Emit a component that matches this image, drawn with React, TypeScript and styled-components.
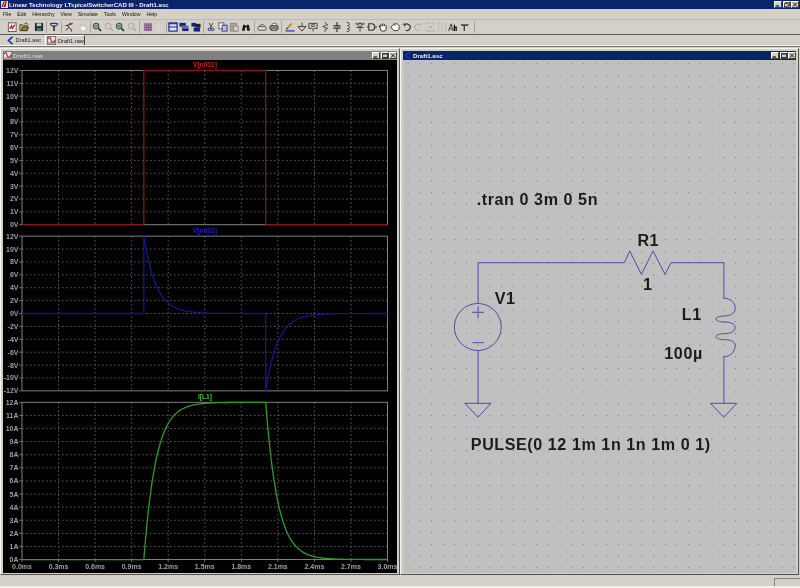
import React from "react";
import styled, { createGlobalStyle } from "styled-components";

const GlobalStyle = createGlobalStyle`
  html, body { margin: 0; padding: 0; background: #d4d0c8; overflow: hidden; }
  #root { width: 800px; height: 588px; }
  * { box-sizing: border-box; }
`;

const Shell = styled.div`
  width: 800px;
  height: 588px;
  display: flex;
  flex-direction: column;
  overflow: hidden;
  background: #d4d0c8;
  font-family: "Liberation Sans", Arial, sans-serif;
  filter: blur(0.25px);
`;

const TitleBar = styled.header`
  height: 9px;
  flex: none;
  background: #0a246a;
  display: flex;
  align-items: center;
  padding: 0 1px 0 1px;
  gap: 1px;
  color: #eef0f6;
  font-size: 6.2px;
  font-weight: 700;
`;

const TitleText = styled.span<{ $dim?: boolean }>`
  flex: 1;
  white-space: nowrap;
  color: ${(p) => (p.$dim ? "#c8c8c8" : "#f2f2f2")};
  font-size: 6px;
  font-weight: 700;
  letter-spacing: 0.05px;
`;

const CaptionGroup = styled.div`
  display: flex;
  gap: 0.5px;
  flex: none;
`;

const CaptionButton = styled.div`
  width: 8px;
  height: 7px;
  background: #d4d0c8;
  border-top: 1px solid #fff;
  border-left: 1px solid #fff;
  border-right: 1px solid #404040;
  border-bottom: 1px solid #404040;
  display: flex;
  align-items: center;
  justify-content: center;
`;

const MenuBar = styled.nav`
  height: 11px;
  flex: none;
  display: flex;
  align-items: center;
  padding: 0 0 1px 3px;
  gap: 6px;
  font-size: 5.2px;
  color: #111;
  border-bottom: 1px solid #bdbab2;
`;

const Toolbar = styled.div`
  height: 15px;
  flex: none;
  display: flex;
  align-items: center;
  padding-left: 6px;
  border-bottom: 1px solid #5a5a58;
`;

const ToolRow = styled.div`
  display: flex;
  align-items: center;
  filter: blur(0.3px);
`;

const ToolButton = styled.div`
  width: 11.7px;
  height: 11px;
  flex: none;
  display: flex;
  align-items: center;
  justify-content: center;
`;

const ToolGap = styled.div<{ $w: number; $line?: boolean }>`
  width: ${(p) => p.$w}px;
  height: 12px;
  flex: none;
  ${(p) =>
    p.$line
      ? `background: linear-gradient(#a8a59d, #a8a59d) center / 1px 100% no-repeat;`
      : ""}
`;

const TabStrip = styled.div`
  height: 10px;
  flex: none;
  display: flex;
  align-items: stretch;
  padding-left: 2px;
  gap: 1px;
  font-size: 5.6px;
  color: #222;
`;

const Tab = styled.div<{ $active?: boolean; $w: number }>`
  width: ${(p) => p.$w}px;
  display: flex;
  align-items: center;
  gap: ${(p) => (p.$active ? 0.5 : 2)}px;
  padding-left: ${(p) => (p.$active ? 4 : 1)}px;
  white-space: nowrap;
  border-left: ${(p) => (p.$active ? "none" : "1px solid #fff")};
  border-top: ${(p) => (p.$active ? "none" : "1px solid #fff")};
  border-right: ${(p) => (p.$active ? "none" : "1px solid #404040")};
`;

const Workspace = styled.main`
  flex: 1;
  min-height: 0;
  display: flex;
  border-top: 1px solid #f4f3ef;
  box-shadow: inset 0 1px 0 #77756f;
`;

const ChildWindow = styled.section<{ $w: number }>`
  width: ${(p) => p.$w}px;
  flex: none;
  margin-top: 2px;
  display: flex;
  flex-direction: column;
  padding: 2px 2px 1px 2px;
  background: #d4d0c8;
  border-top: 1px solid #f6f5f1;
  border-left: 1px solid #f6f5f1;
  border-right: 1px solid #55534f;
  border-bottom: 1px solid #55534f;
  height: 527px;
`;

const ChildTitle = styled.div<{ $active?: boolean }>`
  height: 9px;
  flex: none;
  display: flex;
  align-items: center;
  gap: 1px;
  background: ${(p) => (p.$active ? "#0a246a" : "#808080")};
`;

const PlotFrame = styled.svg`
  display: block;
  flex: 1;
  min-height: 0;
  width: 100%;
  background: #000;
`;

const SchematicFrame = styled.svg`
  display: block;
  flex: 1;
  min-height: 0;
  width: 100%;
  background: #c0c0c0;
`;

const StatusBar = styled.footer`
  flex: 1;
  min-height: 0;
  display: flex;
  justify-content: flex-end;
  align-items: flex-end;
  border-bottom: 2px solid #efeee9;
`;

const StatusPanel = styled.div`
  width: 26px;
  height: 8px;
  border-top: 1px solid #85827a;
  border-left: 1px solid #85827a;
`;

/* ---------- icons ---------- */

const Ico: React.FC<{ children: React.ReactNode; s?: number }> = ({ children, s = 10 }) => (
  <svg width={s} height={s} viewBox="0 0 11 11" fill="none" strokeWidth={1}>
    {children}
  </svg>
);

const Schem = () => (
  <Ico s={9}>
    <path d="M8 1 L3 5.5 L8 10" stroke="#1a2fb0" strokeWidth={2} />
  </Ico>
);

const WaveThumb = () => (
  <Ico s={9}>
    <rect x="0.5" y="0.5" width="10" height="10" fill="#e8e4dc" stroke="#6a6a6a" />
    <path d="M1 4 C3 1 4 1 5 5 S8 8 10 5" stroke="#b01818" strokeWidth={1.3} />
    <path d="M1 8.5 H10" stroke="#555" />
  </Ico>
);

const Mag = ({ off }: { off?: boolean }) => (
  <Ico>
    <circle cx="4.5" cy="4.5" r="3" stroke={off ? "#b0ada7" : "#3f5a48"} strokeWidth={1.3} fill={off ? "#dedbd4" : "#a5c9ae"} />
    <path d="M7 7 L10 10" stroke={off ? "#b0ada7" : "#222"} strokeWidth={1.6} />
    <path d="M3 4.5 H6" stroke={off ? "#c0bdb6" : "#222"} />
  </Ico>
);

const Win = ({ kind }: { kind: number }) => (
  <Ico>
    {kind === 0 && (
      <>
        <rect x="1" y="1" width="9" height="9" stroke="#10208c" strokeWidth={1.2} fill="#dfe2ee" />
        <path d="M1 5.5 H10 M1 2 H10" stroke="#10208c" strokeWidth={1.2} />
      </>
    )}
    {kind === 1 && (
      <>
        <rect x="0.5" y="1" width="7" height="4" fill="#10208c" />
        <rect x="2.5" y="4" width="8" height="3" fill="#6a6f88" />
        <rect x="3.5" y="7" width="7" height="3" fill="#10208c" />
      </>
    )}
    {kind === 2 && (
      <>
        <rect x="0.5" y="1" width="5" height="4" fill="#10208c" />
        <rect x="5" y="2" width="5.5" height="4" fill="#223" />
        <rect x="3" y="6" width="7" height="4.5" fill="#10208c" />
      </>
    )}
  </Ico>
);

const Hand = ({ light }: { light?: boolean }) => (
  <Ico>
    <path
      d="M3 5 V2.5 M5 4.5 V1.5 M7 4.5 V2 M9 5 V3.5 M3 5 L1.5 4 L3 9 C4 10.5 8 10.5 9 8.5 V5"
      stroke={light ? "#c0bdb6" : "#333"}
      strokeWidth={1.1}
      fill="#f6f4ef"
    />
  </Ico>
);

const ICONS: Record<string, React.ReactNode> = {
  new: (
    <Ico>
      <rect x="1.5" y="1" width="8.5" height="9.5" fill="#fff" stroke="#555" />
      <path d="M3 7.5 L5 4 L6 7 L8.5 3" stroke="#d01818" strokeWidth={1.5} />
    </Ico>
  ),
  open: (
    <Ico>
      <path d="M1 3 H4 L5 4 H9 V9.5 H1 Z" fill="#c9b04a" stroke="#4a4428" />
      <path d="M2.5 9.5 L4 5.5 H10.5 L9 9.5 Z" fill="#8f8436" stroke="#3c3820" />
      <path d="M6 2 L8 1 L10 3" stroke="#333" />
    </Ico>
  ),
  save: (
    <Ico>
      <rect x="1" y="1" width="9" height="9" fill="#14322f" />
      <rect x="3" y="1.5" width="5" height="3" fill="#c7ccc8" />
      <rect x="3" y="6.5" width="5" height="3.5" fill="#5d6b69" />
    </Ico>
  ),
  run: (
    <Ico>
      <path d="M1 2.5 C3 1 8 1 10 2.5" stroke="#222" strokeWidth={1.3} />
      <path d="M1.5 3 L5.5 5 L9.5 3" stroke="#2a3fa8" strokeWidth={1.2} />
      <path d="M5.5 4 V10" stroke="#222" strokeWidth={1.6} />
    </Ico>
  ),
  halt: (
    <Ico>
      <path d="M2 9.5 L5 6 L4.5 3.5 L9.5 1.5 M1.5 4 L5 3.5 M5 6 L8 8 V10.5 M7 1 L8 3" stroke="#333" strokeWidth={1.1} />
      <circle cx="6.5" cy="1.6" r="1" fill="#c44" />
    </Ico>
  ),
  handOff: <Hand light />,
  zoomOn: <Mag />,
  zoomOff: <Mag off />,
  tile: (
    <Ico>
      <rect x="1" y="1" width="9" height="9" fill="#b78da6" />
      <path d="M1 3.5 H10 M1 6 H10 M1 8.5 H10 M3.5 1 V10 M6 1 V10 M8.5 1 V10" stroke="#6b5b8c" strokeWidth={0.9} />
    </Ico>
  ),
  tileOff: (
    <Ico>
      <rect x="1" y="1" width="9" height="9" fill="#c6c3bb" />
      <path d="M1 3.5 H10 M1 6 H10 M1 8.5 H10 M3.5 1 V10 M6 1 V10 M8.5 1 V10" stroke="#e2e0da" strokeWidth={0.9} />
    </Ico>
  ),
  win0: <Win kind={0} />,
  win1: <Win kind={1} />,
  win2: <Win kind={2} />,
  cut: (
    <Ico>
      <path d="M3.5 1 L6 6 M7.5 1 L5 6" stroke="#444" strokeWidth={1} />
      <circle cx="3.8" cy="8" r="1.5" stroke="#1a2a80" strokeWidth={1.1} />
      <circle cx="7.2" cy="8" r="1.5" stroke="#1a2a80" strokeWidth={1.1} />
    </Ico>
  ),
  copy: (
    <Ico>
      <rect x="1" y="1" width="5.5" height="6.5" fill="#fff" stroke="#555" />
      <rect x="4.5" y="3.5" width="5.5" height="6.5" fill="#b8bfdc" stroke="#2b3a8c" />
    </Ico>
  ),
  pasteOff: (
    <Ico>
      <rect x="1.5" y="1.5" width="7" height="8.5" fill="#a8a59e" stroke="#8b8880" />
      <rect x="5" y="4.5" width="5" height="5.5" fill="#d5d2cb" stroke="#8b8880" />
    </Ico>
  ),
  find: (
    <Ico>
      <path d="M1 9 L2.5 3 H4.5 V9 Z M10 9 L8.5 3 H6.5 V9 Z" fill="#111" />
      <rect x="4.5" y="4" width="2" height="2" fill="#111" />
      <circle cx="2.7" cy="8.5" r="1.5" fill="#333" />
      <circle cx="8.3" cy="8.5" r="1.5" fill="#333" />
    </Ico>
  ),
  printOutline: (
    <Ico>
      <path d="M2.5 5 C3 2 8 2 8.5 5" stroke="#555" />
      <rect x="1" y="5" width="9" height="4" rx="1" fill="#d8d5ce" stroke="#555" />
    </Ico>
  ),
  print: (
    <Ico>
      <path d="M3 4 L4 1.5 H8 L9 4" stroke="#666" fill="#e8e8e8" />
      <rect x="1" y="4" width="9" height="4.5" rx="1" fill="#8a8781" stroke="#444" />
      <rect x="3" y="7.5" width="5" height="2" fill="#ccc" stroke="#555" />
    </Ico>
  ),
  wire: (
    <Ico>
      <path d="M3 6.5 L7.5 1.5" stroke="#bb8a20" strokeWidth={1.8} />
      <path d="M1.5 8 L3 6.5" stroke="#222" strokeWidth={1.4} />
      <path d="M0.5 9.8 H10.5" stroke="#2433b8" strokeWidth={1.3} />
    </Ico>
  ),
  ground: (
    <Ico>
      <path d="M5.5 0.5 V5 M1 5 H10 L5.5 10 Z" stroke="#444" strokeWidth={1.1} />
    </Ico>
  ),
  label: (
    <Ico>
      <path d="M1 1.5 H10 V7 H7 L5.5 8 L4 7 H1 Z" stroke="#444" strokeWidth={1.1} />
      <path d="M5.5 8 V10.5 M4 3 H7 V5 H4Z" stroke="#444" strokeWidth={0.9} />
    </Ico>
  ),
  res: (
    <Ico>
      <path d="M6 0 V1.5 L8.5 3 L3 5 L8.5 7 L5.5 8.5 V11" stroke="#444" strokeWidth={1} />
    </Ico>
  ),
  cap: (
    <Ico>
      <path d="M5.5 0 V4 M5.5 7 V11 M1.5 4.3 H9.5 M1.5 6.7 H9.5" stroke="#333" strokeWidth={1.3} />
    </Ico>
  ),
  ind: (
    <Ico>
      <path d="M4 0.5 C8 0.5 8 4 5 4 C8 4 8 7.5 5 7.5 C8 7.5 8 10.5 4 10.5" stroke="#333" strokeWidth={1} />
    </Ico>
  ),
  diode: (
    <Ico>
      <path d="M0.5 2 H10.5 M5.5 2 V0 M2 2 L5.5 6 L9 2 M1.5 6 H9.5 M5.5 6 V10.5" stroke="#333" strokeWidth={1} />
    </Ico>
  ),
  comp: (
    <Ico>
      <path d="M0 5.5 H2 M2 2 H5.5 C9.5 2 9.5 9 5.5 9 H2 Z M8.5 5.5 H11" stroke="#333" strokeWidth={1.2} />
    </Ico>
  ),
  handA: <Hand />,
  handB: (
    <Ico>
      <path d="M1 5.5 L5 2 H8 L10 4 V8 L8 9.5 H4 Z" stroke="#333" fill="#f6f4ef" />
      <path d="M4 2 L6 4" stroke="#333" />
    </Ico>
  ),
  undo: (
    <Ico>
      <path d="M2.5 4 A3.5 3.5 0 1 1 4 9" stroke="#333" strokeWidth={1.3} />
      <path d="M0.8 2.5 L3.5 2 L3 5" stroke="#333" strokeWidth={1} />
    </Ico>
  ),
  redoOff: (
    <Ico>
      <path d="M8.5 4 A3.5 3.5 0 1 0 7 9" stroke="#b5b2ab" strokeWidth={1.3} />
      <path d="M10.2 2.5 L7.5 2 L8 5" stroke="#b5b2ab" strokeWidth={1} />
    </Ico>
  ),
  rotOff: (
    <Ico>
      <path d="M1 3 V1 H10 V3 M1 8 V10 H10 V8 M3 5.5 H8 M6 4 L8 5.5 L6 7" stroke="#b0ada6" strokeWidth={1} />
    </Ico>
  ),
  mirOff: (
    <Ico>
      <path d="M3 1 H1.5 V10 H3 M8 1 H9.5 V10 H8 M5.5 1 V10" stroke="#b0ada6" strokeWidth={1} strokeDasharray="2 1" />
    </Ico>
  ),
  text: (
    <Ico>
      <path d="M0.5 10 L3.5 2 L5.5 10 M1.5 7.5 H5" stroke="#444" strokeWidth={1.1} />
      <path d="M7 3 V10 M9 5 V10 M7 6 H9.5" stroke="#111" strokeWidth={1.4} />
    </Ico>
  ),
  spice: (
    <Ico>
      <path d="M0.5 2.5 H10 L8.5 4.5 H5.5 V10 H4 V4.5 H2 Z" fill="#444" />
    </Ico>
  ),
};

type ToolItem = { icon: string } | { gap: number; line?: boolean };

const TOOLS: ToolItem[] = [
  { icon: "new" },
  { icon: "open" },
  { gap: 3.3 },
  { icon: "save" },
  { gap: 3.9, line: true },
  { icon: "run" },
  { gap: 3.7, line: true },
  { icon: "halt" },
  { gap: 2 },
  { icon: "handOff" },
  { gap: 2, line: true },
  { icon: "zoomOn" },
  { icon: "zoomOff" },
  { icon: "zoomOn" },
  { icon: "zoomOff" },
  { gap: 4.2, line: true },
  { icon: "tile" },
  { icon: "tileOff" },
  { gap: 1.6, line: true },
  { icon: "win0" },
  { icon: "win1" },
  { icon: "win2" },
  { gap: 3.3, line: true },
  { icon: "cut" },
  { icon: "copy" },
  { icon: "pasteOff" },
  { icon: "find" },
  { gap: 4.3, line: true },
  { icon: "printOutline" },
  { icon: "print" },
  { gap: 4.3, line: true },
  { icon: "wire" },
  { icon: "ground" },
  { icon: "label" },
  { icon: "res" },
  { icon: "cap" },
  { icon: "ind" },
  { icon: "diode" },
  { icon: "comp" },
  { icon: "handA" },
  { icon: "handB" },
  { icon: "undo" },
  { icon: "redoOff" },
  { icon: "rotOff" },
  { icon: "mirOff" },
  { icon: "text" },
  { icon: "spice" },
  { gap: 8, line: true },
];

const MENUS = ["File", "Edit", "Hierarchy", "View", "Simulate", "Tools", "Window", "Help"];

/* ---------- caption buttons ---------- */

const MinGlyph = () => (
  <svg width="6" height="5" viewBox="0 0 6 5">
    <rect x="0.5" y="3.4" width="3.5" height="1.2" fill="#111" />
  </svg>
);
const MaxGlyph = () => (
  <svg width="6" height="5" viewBox="0 0 6 5" fill="none">
    <rect x="0.5" y="0.5" width="5" height="4" stroke="#333" />
    <path d="M0.5 1 H5.5" stroke="#333" />
  </svg>
);
const RestoreGlyph = () => (
  <svg width="6" height="5" viewBox="0 0 6 5" fill="none">
    <rect x="1.8" y="0.3" width="3.8" height="3" stroke="#333" strokeWidth={0.8} />
    <rect x="0.4" y="1.7" width="3.8" height="3" stroke="#333" strokeWidth={0.8} fill="#d4d0c8" />
  </svg>
);
const CloseGlyph = () => (
  <svg width="6" height="5" viewBox="0 0 6 5">
    <path d="M1 0.5 L5 4.5 M5 0.5 L1 4.5" stroke="#111" strokeWidth={1} />
  </svg>
);

const AppLogo = () => (
  <svg width="7" height="7" viewBox="0 0 7 7">
    <rect width="7" height="7" fill="#e6e2da" />
    <path d="M1 6 L3 1 H6 M4 3 L3 6 M5 1 L4 6" stroke="#b01818" strokeWidth={1.2} fill="none" />
  </svg>
);

/* ---------- waveform chart ---------- */

const X0 = 22;
const X1 = 387.5;
const PX_PER_MS = (X1 - X0) / 3;
const xOf = (t: number) => X0 + t * PX_PER_MS;
const TAU = 0.1;
const vIn = (t: number) => (t >= 1 && t < 2 ? 12 : 0);
const vL = (t: number) => {
  if (t < 1) return 0;
  if (t < 2) return 12 * Math.exp(-(t - 1) / TAU);
  return -12 * Math.exp(-(t - 2) / TAU);
};
const iL = (t: number) => {
  if (t < 1) return 0;
  if (t < 2) return 12 * (1 - Math.exp(-(t - 1) / TAU));
  return 12 * Math.exp(-(t - 2) / TAU);
};

type Pane = {
  top: number;
  bottom: number;
  max: number;
  min: number;
  step: number;
  unit: string;
  name: string;
  labelColor: string;
  color: string;
  fn: (t: number) => number;
};

const PANES: Pane[] = [
  { top: 70.5, bottom: 225, max: 12, min: 0, step: 1, unit: "V", name: "V[n001]", labelColor: "#c42020", color: "#861616", fn: vIn },
  { top: 236.5, bottom: 391.5, max: 12, min: -12, step: 2, unit: "V", name: "V[n002]", labelColor: "#2020c8", color: "#161688", fn: vL },
  { top: 403, bottom: 560.5, max: 12, min: 0, step: 1, unit: "A", name: "I[L1]", labelColor: "#38c838", color: "#309a30", fn: iL },
];

const X_TICKS = Array.from({ length: 11 }, (_, i) => i * 0.3);

const tracePoints = (pane: Pane) => {
  const yOf = (v: number) =>
    pane.top + ((pane.max - v) / (pane.max - pane.min)) * (pane.bottom - pane.top);
  const pts: string[] = [];
  for (let i = 0; i <= 3000; i += 4) {
    const t = i / 1000;
    if (i === 1000 || i === 2000) pts.push(`${xOf(t)},${yOf(pane.fn(t - 0.001))}`);
    pts.push(`${xOf(t)},${yOf(pane.fn(t))}`);
  }
  return pts.join(" ");
};

const AxisText = styled.text`
  font-family: "Liberation Sans", Arial, sans-serif;
  font-size: 7px;
  font-weight: 700;
  fill: #a0a0a0;
`;

const TraceName = styled.text`
  font-family: "Liberation Sans", Arial, sans-serif;
  font-size: 6.6px;
  font-weight: 700;
  text-anchor: middle;
`;

const GRID = "#5e5e5e";

const PaneView: React.FC<{ pane: Pane }> = ({ pane }) => {
  const ticks: number[] = [];
  for (let v = pane.max; v >= pane.min; v -= pane.step) ticks.push(v);
  const yOf = (v: number) =>
    pane.top + ((pane.max - v) / (pane.max - pane.min)) * (pane.bottom - pane.top);
  return (
    <g>
      {X_TICKS.slice(1, -1).map((t) => (
        <path key={t} d={`M${xOf(t)} ${pane.top} V${pane.bottom}`} stroke={GRID} strokeWidth={1} strokeDasharray="1.5 2.5" />
      ))}
      {ticks.map((v) => (
        <g key={v}>
          {v !== pane.max && v !== pane.min && (
            <path d={`M${X0} ${yOf(v)} H${X1}`} stroke={GRID} strokeWidth={1} strokeDasharray="1.5 2.5" />
          )}
          <path d={`M${X0 - 3} ${yOf(v)} H${X0}`} stroke="#808080" strokeWidth={0.8} />
          <AxisText x={18.5} y={yOf(v) + 2.5} textAnchor="end">
            {`${v}${pane.unit}`}
          </AxisText>
        </g>
      ))}
      <rect x={X0} y={pane.top} width={X1 - X0} height={pane.bottom - pane.top} stroke="#808080" strokeWidth={1} fill="none" />
      <polyline points={tracePoints(pane)} fill="none" stroke={pane.color} strokeWidth={1.3} />
      <TraceName x={205} y={pane.top - 3.5} fill={pane.labelColor}>
        {pane.name}
      </TraceName>
    </g>
  );
};

const WaveformChart = () => (
  <PlotFrame viewBox="3 60 394 514" preserveAspectRatio="none">
    {PANES.map((p) => (
      <PaneView key={p.name} pane={p} />
    ))}
    {X_TICKS.map((t) => (
      <g key={t}>
        <path d={`M${xOf(t)} 560.5 v2.5`} stroke="#808080" strokeWidth={0.8} />
        <AxisText x={xOf(t)} y={570.5} textAnchor="middle">
          {`${t.toFixed(1)}ms`}
        </AxisText>
      </g>
    ))}
  </PlotFrame>
);

/* ---------- schematic ---------- */

const WIRE = "#4d4da6";

const PartLabel = styled.text`
  font-family: "Liberation Sans", Arial, sans-serif;
  font-size: 16.2px;
  font-weight: 700;
  letter-spacing: 0.55px;
  fill: #1c1c1c;
`;

const Schematic = () => (
  <SchematicFrame viewBox="403 60 394 513" preserveAspectRatio="none">
    <defs>
      <pattern id="grid" patternUnits="userSpaceOnUse" x={407.6} y={63.3} width={11.72} height={11.72}>
        <rect x={0} y={0} width={1} height={1} fill="#747474" />
      </pattern>
    </defs>
    <rect x={403} y={60} width={394} height={513} fill="url(#grid)" />
    <g fill="none" stroke={WIRE} strokeWidth={1}>
      <path d="M478.3 304 V262.7 H625 L630.3 251 L642 274.3 L653.7 251 L665.7 274.3 L671.7 262.7 H724.7 V298.3" />
      <path d="M724.7 298.3 C731 298.3 736 302 736 308.5 C736 313.5 731 316 725 316 C720 316 716.7 317.5 716.7 319 C716.7 320.5 720 322 725 322 C731 322 736 323.5 736 327.5 C736 331.5 731 333.7 725 333.7 C720 333.7 716.7 335.2 716.7 336.7 C716.7 338.2 720 339.7 725 339.7 C731 339.7 736 341 736 345.5 C736 352 731 356.7 724.7 356.7" />
      <path d="M724.7 356.7 V403.3 M711.3 403.3 H737.7 L724.5 417.3 Z" />
      <circle cx={478} cy={327} r={23.5} />
      <path d="M478.3 350.5 V403.3 M465 403.3 H491.3 L478.2 417.3 Z" />
      <path d="M478.3 306.3 V318.3 M472.3 312.3 H484.3 M472.7 342.7 H484.3" />
    </g>
    <PartLabel x={477} y={205.5}>.tran 0 3m 0 5n</PartLabel>
    <PartLabel x={638} y={246}>R1</PartLabel>
    <PartLabel x={643.5} y={290}>1</PartLabel>
    <PartLabel x={495} y={304}>V1</PartLabel>
    <PartLabel x={682.5} y={320}>L1</PartLabel>
    <PartLabel x={665} y={359}>100µ</PartLabel>
    <PartLabel x={471} y={450.5}>PULSE(0 12 1m 1n 1n 1m 0 1)</PartLabel>
  </SchematicFrame>
);

/* ---------- app ---------- */

const Captions: React.FC<{ restore?: boolean }> = ({ restore }) => (
  <CaptionGroup>
    <CaptionButton>
      <MinGlyph />
    </CaptionButton>
    <CaptionButton>{restore ? <RestoreGlyph /> : <MaxGlyph />}</CaptionButton>
    <CaptionButton>
      <CloseGlyph />
    </CaptionButton>
  </CaptionGroup>
);

export default function App() {
  return (
    <Shell>
      <GlobalStyle />
      <TitleBar>
        <AppLogo />
        <TitleText>Linear Technology LTspice/SwitcherCAD III - Draft1.asc</TitleText>
        <Captions restore />
      </TitleBar>
      <MenuBar>
        {MENUS.map((m) => (
          <span key={m}>{m}</span>
        ))}
      </MenuBar>
      <Toolbar>
        <ToolRow>
          {TOOLS.map((item, i) =>
            "icon" in item ? (
              <ToolButton key={i}>{ICONS[item.icon]}</ToolButton>
            ) : (
              <ToolGap key={i} $w={item.gap} $line={item.line} />
            )
          )}
        </ToolRow>
      </Toolbar>
      <TabStrip>
        <Tab $active $w={42}>
          <Schem />
          Draft1.asc
        </Tab>
        <Tab $w={40}>
          <WaveThumb />
          Draft1.raw
        </Tab>
      </TabStrip>
      <Workspace>
        <ChildWindow $w={400}>
          <ChildTitle>
            <WaveThumb />
            <TitleText $dim>Draft1.raw</TitleText>
            <Captions />
          </ChildTitle>
          <WaveformChart />
        </ChildWindow>
        <ChildWindow $w={399}>
          <ChildTitle $active>
            <Schem />
            <TitleText>Draft1.asc</TitleText>
            <Captions />
          </ChildTitle>
          <Schematic />
        </ChildWindow>
      </Workspace>
      <StatusBar>
        <StatusPanel />
      </StatusBar>
    </Shell>
  );
}
